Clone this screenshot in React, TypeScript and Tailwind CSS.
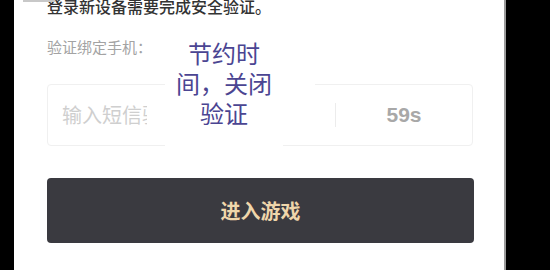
export default function App() {
  const font = { fontFamily: '"Noto Sans CJK SC", "Noto Sans", sans-serif' };
  return (
    <div className="flex h-[270px] w-[550px] overflow-hidden bg-black" style={font}>
      <div className="w-[14px] shrink-0 bg-black" />
      <div className="relative w-[490px] shrink-0 bg-white">
        {/* top bar remnant */}
        <div className="absolute left-[9px] top-0 h-[2px] w-[32px] bg-[#c8c8c8]" />

        <div className="flex flex-col pl-[33px] pr-[18px]">
          <p className="mt-[-4px] h-[20px] text-[16px] leading-[20px] font-medium text-[#333]">
            登录新设备需要完成安全验证。
          </p>
          <p className="mt-[21px] text-[15px] leading-[20px] text-[#a3a3a3]">验证绑定手机：</p>

          <div className="mt-[27px] flex h-[62px] w-[426px] items-center rounded-[4px] border border-[#f0f0f0]">
            <div className="ml-[14px] w-[85px] overflow-hidden whitespace-nowrap text-[20px] text-[#cfcfcf]">
              输入短信验证码
            </div>
            <div className="flex-1" />
            <div className="h-[24px] w-px bg-[#ececec]" />
            <div className="w-[136px] text-center text-[21px] font-bold text-[#a8a8a8]" style={{ fontFamily: '"Liberation Sans", Arial, sans-serif' }}>
              59s
            </div>
          </div>

          <button className="mt-[32px] flex h-[65px] w-[427px] items-center justify-center rounded-[4px] bg-[#3a3a40] text-[20px] font-bold text-[#efd6ab]">
            进入游戏
          </button>
        </div>

        {/* annotation overlay */}
        <div className="absolute left-[269px] top-[70px] h-[26px] w-[32px] bg-white" />
        <div className="absolute left-[151px] top-[36px] flex h-[112px] w-[118px] flex-col items-center bg-white pt-[2px] text-[24px] leading-[30px] text-[#4b4592]">
          <span>节约时</span>
          <span className="whitespace-nowrap">间，关闭</span>
          <span>验证</span>
        </div>
      </div>
      <div className="w-[2px] shrink-0 bg-[#9a9a9a]" />
      <div className="flex-1 bg-black" />
    </div>
  );
}
